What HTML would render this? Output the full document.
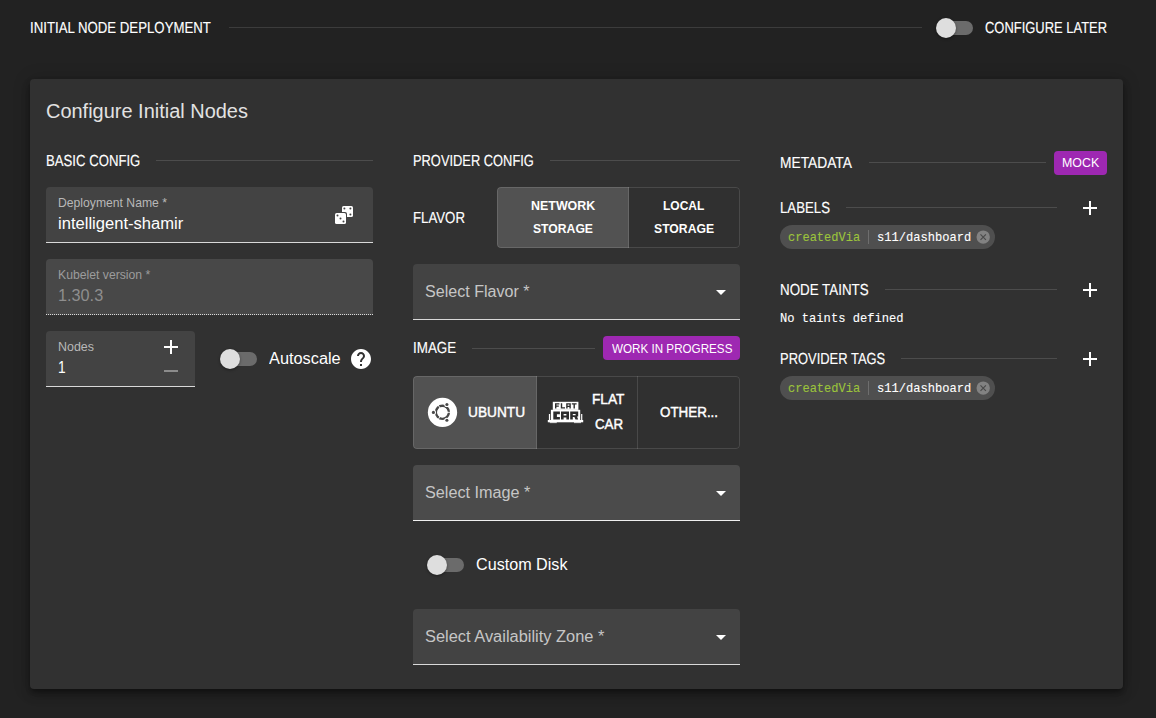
<!DOCTYPE html>
<html lang="en">
<head>
<meta charset="utf-8">
<title>Initial Node Deployment</title>
<style>
html,body{margin:0;padding:0;}
body{width:1156px;height:718px;overflow:hidden;background:#222222;position:relative;font-family:"Liberation Sans",sans-serif;}
.a{position:absolute;}
.t{position:absolute;white-space:nowrap;line-height:1;transform-origin:0 0;}
.s{font-family:"Liberation Sans",sans-serif;}
.m{font-family:"Liberation Mono",monospace;}
.card{left:30px;top:79px;width:1093px;height:610px;background:#313131;border-radius:4px;box-shadow:0 3px 5px -1px rgba(0,0,0,.35),0 6px 10px 0 rgba(0,0,0,.22),0 1px 18px 0 rgba(0,0,0,.2);}
.hl{height:1px;background:#4c4c4c;}
.fld{background:#434343;border-radius:4px 4px 0 0;border-bottom:1px solid #d9d9d9;box-sizing:border-box;}
.fld.hov{background:#4b4b4b;border-bottom-color:#f0f0f0;}
.fld.dis{border-bottom:1px dotted #dadada;background:#484848;}
.trk{width:36px;height:14px;border-radius:7px;background:#6b6b6b;}
.thb{width:20px;height:20px;border-radius:50%;background:#dedede;box-shadow:0 1px 3px rgba(0,0,0,.4);}
.grp{border-radius:4px;overflow:hidden;background:#303030;}
.sel{background:#525252;}
.vd{width:1px;background:rgba(255,255,255,.12);}
.gb{left:0;top:0;right:0;bottom:0;border-radius:4px;box-shadow:inset 0 0 0 1px rgba(255,255,255,.12);}
.badge{background:#9e28b2;border-radius:4px;}
.chip{height:24px;border-radius:12px;background:#4f4f4f;}
.arr{width:0;height:0;border-left:5px solid transparent;border-right:5px solid transparent;border-top:5px solid #fff;}
</style>
</head>
<body>
<!-- header -->
<div class="a hl" style="left:229px;top:27px;width:693px;background:#3c3c3c"></div>
<div class="a trk" style="left:937px;top:21px"></div>
<div class="a thb" style="left:936px;top:18px"></div>

<div class="a card"></div>

<!-- column 1 -->
<div class="a hl" style="left:156px;top:160px;width:217px"></div>
<div class="a fld" style="left:46px;top:187px;width:327px;height:56px"></div>
<svg class="a" style="left:334px;top:205px" width="20" height="20" viewBox="334 205 20 20">
  <rect x="342" y="206" width="11" height="11" rx="1.6" fill="#fff"/>
  <rect x="334" y="212" width="13" height="13" rx="2" fill="#434343"/>
  <rect x="335" y="213" width="11" height="11" rx="1.6" fill="#fff"/>
  <g fill="#434343">
    <circle cx="344.4" cy="208.6" r="1"/><circle cx="350.4" cy="208.6" r="1"/><circle cx="350.4" cy="214.4" r="1"/>
    <circle cx="337.5" cy="215.4" r="1"/><circle cx="340.5" cy="218.5" r="1"/><circle cx="343.5" cy="221.6" r="1"/>
  </g>
</svg>
<div class="a fld dis" style="left:46px;top:259px;width:327px;height:56px"></div>
<div class="a fld" style="left:46px;top:331px;width:149px;height:56px"></div>
<!-- plus / minus in nodes -->
<div class="a" style="left:164px;top:346px;width:14px;height:2px;background:#fff"></div>
<div class="a" style="left:170px;top:340px;width:2px;height:14px;background:#fff"></div>
<div class="a" style="left:164px;top:370px;width:14px;height:2px;background:#8c8c8c"></div>
<!-- autoscale toggle -->
<div class="a trk" style="left:221px;top:352px"></div>
<div class="a thb" style="left:220px;top:349px"></div>
<svg class="a" style="left:349px;top:347px" width="24" height="24" viewBox="0 0 24 24"><path fill="#fff" d="M12 2C6.48 2 2 6.48 2 12s4.48 10 10 10 10-4.480 10-10S17.520 2 12 2zm1 17h-2v-2h2v2zm2.070-7.750l-.9.920C13.450 12.900 13 13.500 13 15h-2v-.5c0-1.100.45-2.100 1.170-2.830l1.240-1.260c.37-.36.59-.86.59-1.410 0-1.100-.9-2-2-2s-2 .9-2 2H8c0-2.210 1.790-4 4-4s4 1.790 4 4c0 .880-.36 1.680-.93 2.250z"/></svg>

<!-- column 2 -->
<div class="a hl" style="left:550px;top:160px;width:190px"></div>
<div class="a grp" style="left:497px;top:187px;width:243px;height:61px"><div class="a sel" style="left:0;top:0;width:132px;height:61px"></div><div class="a vd" style="left:131px;top:0;height:61px"></div><div class="a gb"></div></div>
<div class="a fld" style="left:413px;top:264px;width:327px;height:56px"></div>
<div class="a arr" style="left:716px;top:290px"></div>
<div class="a hl" style="left:472px;top:348px;width:123px"></div>
<div class="a badge" style="left:603px;top:336px;width:137px;height:24px"></div>
<div class="a grp" style="left:413px;top:376px;width:327px;height:73px"><div class="a sel" style="left:0;top:0;width:124px;height:73px"></div><div class="a vd" style="left:123px;top:0;height:73px"></div><div class="a vd" style="left:224px;top:0;height:73px"></div><div class="a gb"></div></div>
<!-- ubuntu -->
<svg class="a" style="left:427px;top:397px" width="31" height="31" viewBox="427 397 31 31">
  <circle cx="442.5" cy="412.4" r="14.65" fill="#fff"/>
  <circle cx="442.4" cy="412.3" r="6.45" fill="none" stroke="#484848" stroke-width="2.5"/>
  <g fill="#fff"><circle cx="433.4" cy="412.4" r="2.6"/><circle cx="446.9" cy="404.5" r="2.6"/><circle cx="446.9" cy="420.3" r="2.6"/></g>
  <g stroke="#fff" stroke-width="0.9"><line x1="442.4" y1="412.3" x2="452" y2="412.3"/><line x1="442.4" y1="412.3" x2="437.6" y2="404"/><line x1="442.4" y1="412.3" x2="437.6" y2="420.6"/></g>
  <circle cx="442.4" cy="412.3" r="5.1" fill="#fff"/>
  <g fill="#484848"><circle cx="433.4" cy="412.4" r="1.55"/><circle cx="446.9" cy="404.5" r="1.55"/><circle cx="446.9" cy="420.3" r="1.55"/></g>
</svg>
<!-- flatcar -->
<svg class="a" style="left:547px;top:400px" width="38" height="25" viewBox="547 400 38 25" shape-rendering="auto">
  <rect x="552.8" y="401.8" width="25.6" height="8.1" fill="#fff"/>
  <rect x="550.9" y="409.8" width="29.3" height="11" fill="#fff"/>
  <rect x="548.9" y="414" width="1.2" height="7" fill="#fff"/>
  <rect x="581.1" y="414" width="1.2" height="7" fill="#fff"/>
  <rect x="547.8" y="420" width="35.4" height="2.3" fill="#fff"/>
  <rect x="549.8" y="422.3" width="7" height="0.8" fill="#fff"/>
  <rect x="574" y="422.3" width="7" height="0.8" fill="#fff"/>
  <g fill="#2c2c2c">
    <!-- FLAT -->
    <path d="M555 403.2h4.4v1.3h-3v1h2.4v1.2h-2.4v1.8H555z"/>
    <path d="M560.8 403.2h1.4v4h2.8v1.300h-4.200z"/>
    <path d="M566.200 403.2h4.600v5.300h-1.400v-1.600h-1.800v1.600h-1.400zm1.400 1.300v1.200h1.800v-1.200z"/>
    <path d="M571.800 403.2h4.800v1.300h-1.700v4h-1.400v-4h-1.700z"/>
    <!-- CAR -->
    <path d="M553.300 411.600h6.600v2.600h-3v2.800h3v2.600h-6.600z"/>
    <path d="M561 411.600h8v8h-2.600v-2.200h-2.800v2.200H561zm2.600 2.400v1.400h2.800V414z"/>
    <path d="M570.200 411.600h8v5h-1.200l1.200 3h-2.700l-1.100-2.600h-1.600v2.600h-2.600zm2.600 2.300v1.300h2.800v-1.300z"/>
  </g>
</svg>
<div class="a fld hov" style="left:413px;top:465px;width:327px;height:56px"></div>
<div class="a arr" style="left:716px;top:491px"></div>
<div class="a trk" style="left:428px;top:558px"></div>
<div class="a thb" style="left:427px;top:555px"></div>
<div class="a fld" style="left:413px;top:609px;width:327px;height:56px"></div>
<div class="a arr" style="left:716px;top:635px"></div>

<!-- column 3 -->
<div class="a hl" style="left:869px;top:162px;width:177px"></div>
<div class="a badge" style="left:1054px;top:151px;width:53px;height:24px"></div>
<div class="a hl" style="left:846px;top:207px;width:211px"></div>
<div class="a hl" style="left:885px;top:289px;width:172px"></div>
<div class="a hl" style="left:901px;top:358px;width:156px"></div>
<!-- plus icons -->
<div class="a" style="left:1083px;top:207px;width:14px;height:2px;background:#fff"></div>
<div class="a" style="left:1089px;top:201px;width:2px;height:14px;background:#fff"></div>
<div class="a" style="left:1083px;top:289px;width:14px;height:2px;background:#fff"></div>
<div class="a" style="left:1089px;top:283px;width:2px;height:14px;background:#fff"></div>
<div class="a" style="left:1083px;top:358px;width:14px;height:2px;background:#fff"></div>
<div class="a" style="left:1089px;top:352px;width:2px;height:14px;background:#fff"></div>
<!-- chips -->
<div class="a chip" style="left:780px;top:225px;width:215px"></div>
<div class="a" style="left:868px;top:230px;width:1px;height:14px;background:#6e6e6e"></div>
<svg class="a" style="left:976px;top:230px" width="14" height="14" viewBox="0 0 14 14"><circle cx="7.2" cy="7.1" r="6.7" fill="#828282"/><path d="M4.500 4.400l5.400 5.400M9.900 4.400l-5.400 5.400" stroke="#4a4a4a" stroke-width="1.15" fill="none"/></svg>
<div class="a chip" style="left:780px;top:376px;width:215px"></div>
<div class="a" style="left:868px;top:381px;width:1px;height:14px;background:#6e6e6e"></div>
<svg class="a" style="left:976px;top:381px" width="14" height="14" viewBox="0 0 14 14"><circle cx="7.2" cy="7.1" r="6.7" fill="#828282"/><path d="M4.500 4.400l5.400 5.400M9.900 4.400l-5.400 5.400" stroke="#4a4a4a" stroke-width="1.15" fill="none"/></svg>

<!-- text -->
<div class="t s" style="left:30.26px;top:20.24px;font-size:16px;font-weight:400;color:#ffffff;transform:scaleX(0.8260) rotate(0.03deg);-webkit-text-stroke:0.15px #ffffff;">INITIAL NODE DEPLOYMENT</div>
<div class="t s" style="left:985.35px;top:20.24px;font-size:16px;font-weight:400;color:#ffffff;transform:scaleX(0.8092) rotate(0.03deg);-webkit-text-stroke:0.15px #ffffff;">CONFIGURE LATER</div>
<div class="t s" style="left:46.38px;top:100.71px;font-size:20px;font-weight:400;color:#e2e2e2;transform:scaleX(0.9979);">Configure Initial Nodes</div>
<div class="t s" style="left:45.96px;top:153.14px;font-size:16px;font-weight:400;color:#ffffff;transform:scaleX(0.8227) rotate(0.03deg);-webkit-text-stroke:0.15px #ffffff;">BASIC CONFIG</div>
<div class="t s" style="left:58.02px;top:197.04px;font-size:12.6px;font-weight:400;color:#b8b8b8;transform:scaleX(0.9666);">Deployment Name *</div>
<div class="t s" style="left:57.91px;top:215.94px;font-size:16px;font-weight:400;color:#ffffff;transform:scaleX(1.0357);">intelligent-shamir</div>
<div class="t s" style="left:57.71px;top:269.24px;font-size:12.6px;font-weight:400;color:#9c9c9c;transform:scaleX(0.9694);">Kubelet version *</div>
<div class="t s" style="left:58.16px;top:287.54px;font-size:16px;font-weight:400;color:#8e8e8e;transform:scaleX(1.0154);">1.30.3</div>
<div class="t s" style="left:57.69px;top:340.94px;font-size:12.6px;font-weight:400;color:#b8b8b8;transform:scaleX(0.9886);">Nodes</div>
<div class="t s" style="left:58.35px;top:359.64px;font-size:16px;font-weight:400;color:#ffffff;transform:scaleX(0.8584);">1</div>
<div class="t s" style="left:268.75px;top:350.74px;font-size:16px;font-weight:400;color:#ffffff;transform:scaleX(1.0198);">Autoscale</div>
<div class="t s" style="left:413.28px;top:153.14px;font-size:16px;font-weight:400;color:#ffffff;transform:scaleX(0.8044) rotate(0.03deg);-webkit-text-stroke:0.15px #ffffff;">PROVIDER CONFIG</div>
<div class="t s" style="left:413.25px;top:209.94px;font-size:16px;font-weight:400;color:#ffffff;transform:scaleX(0.8271) rotate(0.03deg);-webkit-text-stroke:0.15px #ffffff;">FLAVOR</div>
<div class="t s" style="left:530.86px;top:199.92px;font-size:12.4px;font-weight:700;color:#ffffff;transform:scaleX(1.0038);">NETWORK</div>
<div class="t s" style="left:532.99px;top:222.92px;font-size:12.4px;font-weight:700;color:#ffffff;transform:scaleX(0.9826);">STORAGE</div>
<div class="t s" style="left:663.39px;top:199.92px;font-size:12.4px;font-weight:700;color:#ffffff;transform:scaleX(0.9676);">LOCAL</div>
<div class="t s" style="left:653.89px;top:222.92px;font-size:12.4px;font-weight:700;color:#ffffff;transform:scaleX(0.9843);">STORAGE</div>
<div class="t s" style="left:424.91px;top:283.94px;font-size:16px;font-weight:400;color:#c6c6c6;transform:scaleX(1.0052);">Select Flavor *</div>
<div class="t s" style="left:413.14px;top:340.34px;font-size:16px;font-weight:400;color:#ffffff;transform:scaleX(0.8393) rotate(0.03deg);-webkit-text-stroke:0.15px #ffffff;">IMAGE</div>
<div class="t s" style="left:612.08px;top:342.16px;font-size:13px;font-weight:400;color:#ffffff;transform:scaleX(0.8962);">WORK IN PROGRESS</div>
<div class="t s" style="left:467.69px;top:405.05px;font-size:14.6px;font-weight:400;color:#ffffff;transform:scaleX(0.9385);-webkit-text-stroke:0.45px #ffffff;">UBUNTU</div>
<div class="t s" style="left:591.77px;top:392.35px;font-size:14.6px;font-weight:400;color:#ffffff;transform:scaleX(0.9371);-webkit-text-stroke:0.45px #ffffff;">FLAT</div>
<div class="t s" style="left:594.88px;top:417.05px;font-size:14.6px;font-weight:400;color:#ffffff;transform:scaleX(0.9127);-webkit-text-stroke:0.45px #ffffff;">CAR</div>
<div class="t s" style="left:659.59px;top:405.05px;font-size:14.6px;font-weight:400;color:#ffffff;transform:scaleX(0.9178);-webkit-text-stroke:0.45px #ffffff;">OTHER...</div>
<div class="t s" style="left:424.80px;top:484.94px;font-size:16px;font-weight:400;color:#c6c6c6;transform:scaleX(1.0130);">Select Image *</div>
<div class="t s" style="left:476.43px;top:556.94px;font-size:16px;font-weight:400;color:#ffffff;transform:scaleX(1.0088);">Custom Disk</div>
<div class="t s" style="left:424.79px;top:629.24px;font-size:16px;font-weight:400;color:#c6c6c6;transform:scaleX(1.0255);">Select Availability Zone *</div>
<div class="t s" style="left:780.21px;top:155.04px;font-size:16px;font-weight:400;color:#ffffff;transform:scaleX(0.8606) rotate(0.03deg);-webkit-text-stroke:0.15px #ffffff;">METADATA</div>
<div class="t s" style="left:1062.02px;top:156.16px;font-size:13px;font-weight:400;color:#ffffff;transform:scaleX(0.9551);">MOCK</div>
<div class="t s" style="left:780.25px;top:200.04px;font-size:16px;font-weight:400;color:#ffffff;transform:scaleX(0.8270) rotate(0.03deg);-webkit-text-stroke:0.15px #ffffff;">LABELS</div>
<div class="t s" style="left:779.84px;top:282.04px;font-size:16px;font-weight:400;color:#ffffff;transform:scaleX(0.8358) rotate(0.03deg);-webkit-text-stroke:0.15px #ffffff;">NODE TAINTS</div>
<div class="t s" style="left:779.88px;top:351.04px;font-size:16px;font-weight:400;color:#ffffff;transform:scaleX(0.8088) rotate(0.03deg);-webkit-text-stroke:0.15px #ffffff;">PROVIDER TAGS</div>
<div class="t m" style="left:788.32px;top:231.10px;font-size:13.4px;font-weight:400;color:#9cc43c;transform:scaleX(0.8975);-webkit-text-stroke:0.12px #9cc43c;">createdVia</div>
<div class="t m" style="left:877.04px;top:231.10px;font-size:13.4px;font-weight:400;color:#ffffff;transform:scaleX(0.9026);-webkit-text-stroke:0.12px #ffffff;">s11/dashboard</div>
<div class="t m" style="left:779.89px;top:312.00px;font-size:13.4px;font-weight:400;color:#ffffff;transform:scaleX(0.9046);-webkit-text-stroke:0.12px #ffffff;">No taints defined</div>
<div class="t m" style="left:788.32px;top:382.10px;font-size:13.4px;font-weight:400;color:#9cc43c;transform:scaleX(0.8975);-webkit-text-stroke:0.12px #9cc43c;">createdVia</div>
<div class="t m" style="left:877.04px;top:382.10px;font-size:13.4px;font-weight:400;color:#ffffff;transform:scaleX(0.9026);-webkit-text-stroke:0.12px #ffffff;">s11/dashboard</div>
</body>
</html>
